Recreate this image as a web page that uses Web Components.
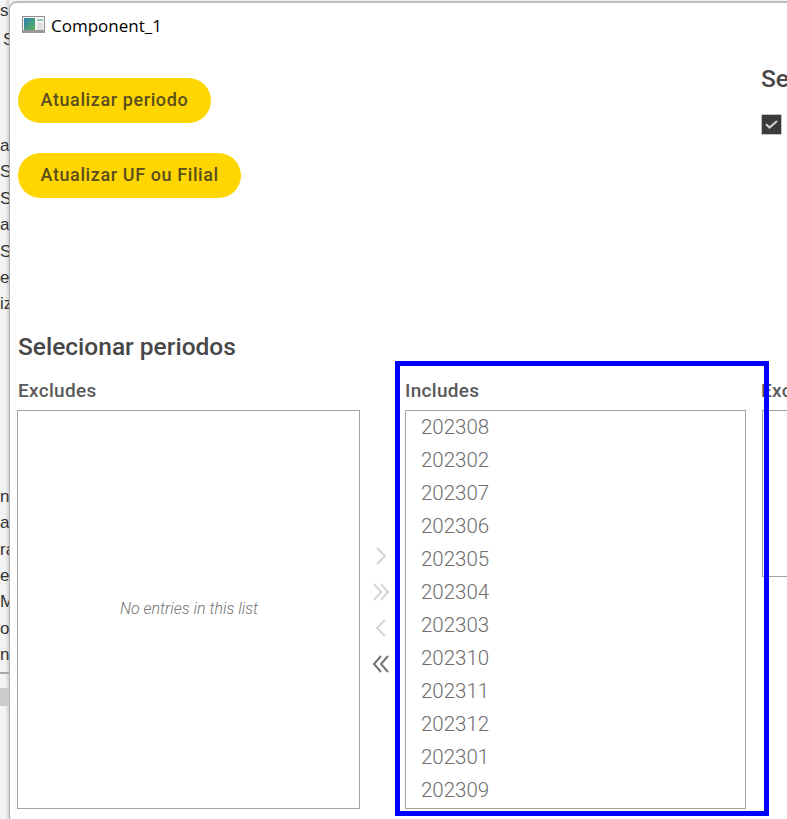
<!DOCTYPE html>
<html lang="pt">
<head>
<meta charset="utf-8">
<title>Component_1</title>
<style>
  html, body { margin: 0; padding: 0; height: 100%; overflow: hidden; background: #fff; }
  body { font-family: Roboto, "Liberation Sans", sans-serif; }
</style>
</head>
<body>

<shot-frame>
  <behind-window slot="behind"></behind-window>

  <app-window caption="Component_1">
    <top-row>
      <action-button>Atualizar periodo</action-button>
      <action-button>Atualizar UF ou Filial</action-button>
      <side-panel slot="side">
        <section-title>Se</section-title>
        <check-mark></check-mark>
      </side-panel>
    </top-row>

    <section-title>Selecionar periodos</section-title>

    <dual-list>
      <list-box label="Excludes" wide></list-box>
      <shuttle-buttons slot="middle"></shuttle-buttons>
      <list-box label="Includes" slot="right">
        <list-item>202308</list-item>
        <list-item>202302</list-item>
        <list-item>202307</list-item>
        <list-item>202306</list-item>
        <list-item>202305</list-item>
        <list-item>202304</list-item>
        <list-item>202303</list-item>
        <list-item>202310</list-item>
        <list-item>202311</list-item>
        <list-item>202312</list-item>
        <list-item>202301</list-item>
        <list-item>202309</list-item>
      </list-box>
      <list-box label="Exc" slot="next" blank short></list-box>
    </dual-list>
  </app-window>

  <note-frame slot="over"></note-frame>
</shot-frame>

<script>
class ShotFrame extends HTMLElement {
  constructor() {
    super();
    const shadow = this.attachShadow({ mode: 'open' });
    shadow.innerHTML = `
      <style>
        :host {
          display: flex;
          position: relative;
          width: 787px;
          height: 819px;
          overflow: hidden;
          background: #f1f1f1;
        }
      </style>
      <slot name="behind"></slot>
      <slot></slot>
      <slot name="over"></slot>
    `;
  }
}

/* The window behind the app: only a 9px strip of it shows */
class BehindWindow extends HTMLElement {
  constructor() {
    super();
    const shadow = this.attachShadow({ mode: 'open' });
    const upper = ['a', 'S', 'S', 'a', 'S', 'es', 'iz'];
    const lower = ['n', 'a', 'ra', 'eg', 'Mi', 'op', 'n'];
    const row = t => `<div class="row">${t}</div>`;
    shadow.innerHTML = `
      <style>
        :host {
          display: flex;
          flex-direction: column;
          flex: none;
          width: 9px;
          height: 819px;
          overflow: hidden;
          background: linear-gradient(to right, #f3f3f3 55%, #d4d4d4);
          color: #333;
          font: 17px/26.4px "Liberation Sans", sans-serif;
          white-space: nowrap;
        }
        .top { height: 133px; }
        .top .row:first-child { line-height: 22px; }
        .top .row + .row { padding-left: 3px; line-height: 28px; }
        .gap { height: 166px; flex: none; }
        .rule { height: 2px; background: #a9a9a9; margin-top: 4px; flex: none; }
        .band { height: 18px; background: #cdcdcd; margin-top: 14px; flex: none; }
        .row { height: 26.4px; flex: none; }
      </style>
      <div class="top">${row('s')}${row('S')}</div>
      ${upper.map(row).join('')}
      <div class="gap"></div>
      ${lower.map(row).join('')}
      <div class="rule"></div>
      <div class="band"></div>
    `;
  }
}

class AppWindow extends HTMLElement {
  constructor() {
    super();
    const shadow = this.attachShadow({ mode: 'open' });
    shadow.innerHTML = `
      <style>
        :host {
          display: flex;
          flex-direction: column;
          flex: none;
          width: 778px;
          margin-top: 1px;
          background: #fff;
          border-top: 2px solid #bdbdbd;
          border-left: 1px solid #b0b0b0;
          border-top-left-radius: 8px;
          box-sizing: border-box;
        }
        header {
          display: flex;
          align-items: center;
          gap: 6px;
          height: 46px;
          padding-left: 12px;
          font: 17px "Open Sans", sans-serif;
          color: #000;
        }
        svg { display: block; margin-top: -4px; }
        #caption { margin-top: -2px; }
        main { padding-left: 8px; }
      </style>
      <header>
        <svg width="23" height="17" viewBox="0 0 23 17">
          <defs>
            <linearGradient id="thumb" x1="0" y1="0" x2="1" y2="1">
              <stop offset="0" stop-color="#2f7fb0"/>
              <stop offset="1" stop-color="#5fae5a"/>
            </linearGradient>
          </defs>
          <rect x="0.5" y="0.5" width="22" height="16" fill="#f4f4f4" stroke="#8e8e8e"/>
          <rect x="2" y="2" width="11" height="12" fill="url(#thumb)"/>
          <rect x="15" y="3" width="6" height="2" fill="#9fc7b8"/>
          <rect x="15" y="7" width="6" height="7" fill="#dfdfdf"/>
          <rect x="0" y="14" width="23" height="3" fill="#9a9a9a"/>
        </svg>
        <span id="caption"></span>
      </header>
      <main><slot></slot></main>
    `;
    shadow.getElementById('caption').textContent = this.getAttribute('caption');
  }
}

class TopRow extends HTMLElement {
  constructor() {
    super();
    const shadow = this.attachShadow({ mode: 'open' });
    shadow.innerHTML = `
      <style>
        :host {
          display: grid;
          grid-template-columns: 743px 1fr;
          height: 284px;
          padding-top: 16px;
          box-sizing: border-box;
        }
        .actions {
          display: flex;
          flex-direction: column;
          align-items: flex-start;
          gap: 30px;
          padding-top: 13px;
        }
      </style>
      <div class="actions"><slot></slot></div>
      <slot name="side"></slot>
    `;
  }
}

class ActionButton extends HTMLElement {
  constructor() {
    super();
    const shadow = this.attachShadow({ mode: 'open' });
    shadow.innerHTML = `
      <style>
        :host {
          display: inline-flex;
          align-items: center;
          height: 45px;
          box-sizing: border-box;
          padding: 0 22.5px 2px 22.5px;
          border-radius: 23px;
          background: #ffd600;
          color: #5a4f1c;
          font: 500 18px Roboto, sans-serif;
          letter-spacing: .6px;
          white-space: nowrap;
        }
      </style>
      <slot></slot>
    `;
  }
}

class SidePanel extends HTMLElement {
  constructor() {
    super();
    const shadow = this.attachShadow({ mode: 'open' });
    shadow.innerHTML = `
      <style>
        :host { display: flex; flex-direction: column; gap: 21px; overflow: hidden; }
      </style>
      <slot></slot>
    `;
  }
}

class SectionTitle extends HTMLElement {
  constructor() {
    super();
    const shadow = this.attachShadow({ mode: 'open' });
    shadow.innerHTML = `
      <style>
        :host {
          display: block;
          color: #474747;
          font: 500 24.5px/28px Roboto, sans-serif;
          white-space: nowrap;
        }
      </style>
      <slot></slot>
    `;
  }
}

class CheckMark extends HTMLElement {
  constructor() {
    super();
    const shadow = this.attachShadow({ mode: 'open' });
    shadow.innerHTML = `
      <style>
        :host {
          display: flex;
          align-items: center;
          justify-content: center;
          width: 21px;
          height: 21px;
          box-sizing: border-box;
          background: #3d3a3a;
          border: 1px solid #c4c4c4;
          border-radius: 1px;
        }
        svg { display: block; }
      </style>
      <svg width="13" height="9" viewBox="0 0 13 9">
        <path d="M1 4.2 L4.6 7.6 L12 1" fill="none" stroke="#d2d2d2" stroke-width="2"/>
      </svg>
    `;
  }
}

class DualList extends HTMLElement {
  constructor() {
    super();
    const shadow = this.attachShadow({ mode: 'open' });
    shadow.innerHTML = `
      <style>
        :host {
          display: grid;
          grid-template-columns: 342px 45px 341px 1fr;
          margin-top: 16px;
        }
        .next { padding-left: 15px; overflow: hidden; }
      </style>
      <slot></slot>
      <slot name="middle"></slot>
      <slot name="right"></slot>
      <div class="next"><slot name="next"></slot></div>
    `;
  }
}

class ListBox extends HTMLElement {
  constructor() {
    super();
    const shadow = this.attachShadow({ mode: 'open' });
    shadow.innerHTML = `
      <style>
        :host {
          display: flex;
          flex-direction: column;
          min-width: 0;
        }
        .label {
          height: 33px;
          color: #5a5a5a;
          font: 500 19px/28px Roboto, sans-serif;
          letter-spacing: .3px;
          white-space: nowrap;
        }
        .box {
          display: flex;
          flex-direction: column;
          height: 399px;
          box-sizing: border-box;
          padding: 0 0 0 15px;
          border: 1px solid #a3a3a3;
          background: #fff;
        }
        :host([wide]) .box { margin-left: -1px; }
        :host([short]) .box { height: 167px; width: 342px; margin-left: 1px; }
        .empty {
          display: flex;
          flex: 1;
          align-items: center;
          justify-content: center;
          margin-left: -14px;
          padding-bottom: 3px;
          color: #747474;
          font: italic 300 16px Roboto, sans-serif;
        }
      </style>
      <div class="label"></div>
      <div class="box">
        <slot><div class="empty">No entries in this list</div></slot>
      </div>
    `;
    shadow.querySelector('.label').textContent = this.getAttribute('label');
    if (this.hasAttribute('blank')) shadow.querySelector('.empty').textContent = '';
  }
}

class ListItem extends HTMLElement {
  constructor() {
    super();
    const shadow = this.attachShadow({ mode: 'open' });
    shadow.innerHTML = `
      <style>
        :host {
          display: block;
          height: 33px;
          color: #6e6e6e;
          font: 300 20.5px/33px Roboto, sans-serif;
        }
      </style>
      <slot></slot>
    `;
  }
}

class ShuttleIcon extends HTMLElement {
  constructor() {
    super();
    this.attachShadow({ mode: 'open' });
  }

  connectedCallback() {
    const left = this.getAttribute('dir') === 'left';
    const double = this.hasAttribute('double');
    const paths = double
      ? (left ? ['M9 1 L2 9 L9 17', 'M16 1 L9 9 L16 17'] : ['M2 1 L9 9 L2 17', 'M9 1 L16 9 L9 17'])
      : (left ? ['M13 1 L5 9 L13 17'] : ['M5 1 L13 9 L5 17']);
    this.shadowRoot.innerHTML = `
      <style>
        :host { display: block; width: 18px; height: 18px; }
        svg { display: block; }
        path { fill: none; stroke: var(--icon-color, #d6d6d6); stroke-width: 2; }
        :host([active]) { --icon-color: #737373; }
      </style>
      <svg width="18" height="18" viewBox="0 0 18 18">
        ${paths.map(d => `<path d="${d}"/>`).join('')}
      </svg>
    `;
  }
}

class ShuttleButtons extends HTMLElement {
  constructor() {
    super();
    const shadow = this.attachShadow({ mode: 'open' });
    shadow.innerHTML = `
      <style>
        :host {
          display: flex;
          flex-direction: column;
          align-items: center;
          justify-content: center;
          gap: 18px;
          padding-top: 34px;
          padding-right: 3px;
        }
      </style>
      <shuttle-icon></shuttle-icon>
      <shuttle-icon double></shuttle-icon>
      <shuttle-icon dir="left"></shuttle-icon>
      <shuttle-icon dir="left" double active></shuttle-icon>
    `;
  }
}

/* Blue highlight somebody drew over the screenshot */
class NoteFrame extends HTMLElement {
  constructor() {
    super();
    const shadow = this.attachShadow({ mode: 'open' });
    shadow.innerHTML = `
      <style>
        :host {
          position: absolute;
          left: 395px;
          top: 361px;
          width: 374px;
          height: 455px;
          box-sizing: border-box;
          border: 5px solid #0000ff;
          pointer-events: none;
        }
      </style>
    `;
  }
}

customElements.define('shot-frame', ShotFrame);
customElements.define('behind-window', BehindWindow);
customElements.define('app-window', AppWindow);
customElements.define('top-row', TopRow);
customElements.define('action-button', ActionButton);
customElements.define('side-panel', SidePanel);
customElements.define('section-title', SectionTitle);
customElements.define('check-mark', CheckMark);
customElements.define('dual-list', DualList);
customElements.define('list-box', ListBox);
customElements.define('list-item', ListItem);
customElements.define('shuttle-icon', ShuttleIcon);
customElements.define('shuttle-buttons', ShuttleButtons);
customElements.define('note-frame', NoteFrame);
</script>
</body>
</html>
